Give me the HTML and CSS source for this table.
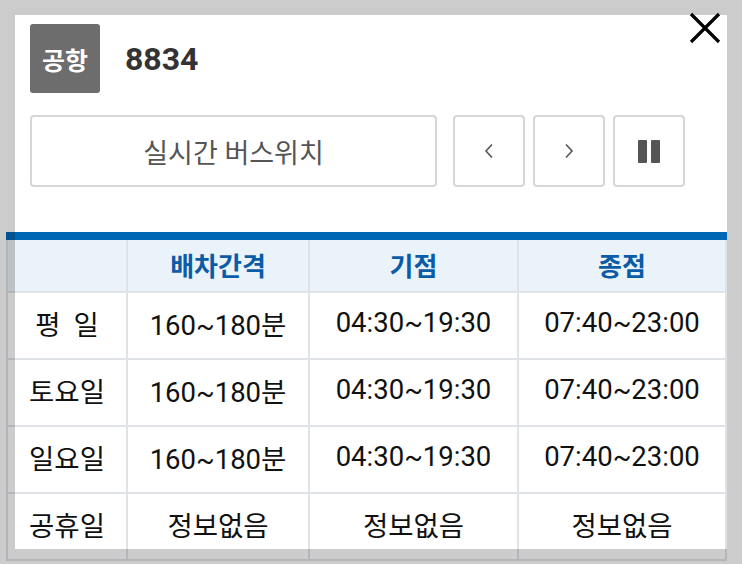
FILE: index.html
```html
<!DOCTYPE html>
<html lang="ko">
<head>
<meta charset="utf-8">
<title>8834</title>
<link rel="stylesheet" href="styles.css">
</head>
<body>
<div class="page">
  <div class="head">
    <span class="badge">공항</span>
    <h1 class="route">8834</h1>
  </div>
  <div class="controls">
    <button class="btn btn-wide">실시간 버스위치</button>
    <button class="btn btn-sq" aria-label="이전">
      <svg width="10" height="16" viewBox="0 0 10 16"><path d="M8 1.5 L2 8 L8 14.5" fill="none" stroke="#555" stroke-width="1.6"/></svg>
    </button>
    <button class="btn btn-sq" aria-label="다음">
      <svg width="10" height="16" viewBox="0 0 10 16"><path d="M2 1.5 L8 8 L2 14.5" fill="none" stroke="#555" stroke-width="1.6"/></svg>
    </button>
    <button class="btn btn-sq" aria-label="일시정지">
      <span class="pause"><span></span><span></span></span>
    </button>
  </div>
  <div class="schedule">
    <table>
      <colgroup>
        <col class="c1"><col class="c2"><col class="c3"><col class="c4">
      </colgroup>
      <thead>
        <tr><th></th><th>배차간격</th><th>기점</th><th>종점</th></tr>
      </thead>
      <tbody>
        <tr><td class="day">평 일</td><td>160~180분</td><td>04:30~19:30</td><td>07:40~23:00</td></tr>
        <tr><td class="day">토요일</td><td>160~180분</td><td>04:30~19:30</td><td>07:40~23:00</td></tr>
        <tr><td class="day">일요일</td><td>160~180분</td><td>04:30~19:30</td><td>07:40~23:00</td></tr>
        <tr><td class="day">공휴일</td><td>정보없음</td><td>정보없음</td><td>정보없음</td></tr>
      </tbody>
    </table>
  </div>
</div>
<div class="dim"></div>
<button class="close" aria-label="닫기">
  <svg width="32" height="32" viewBox="0 0 32 32"><path d="M2 2 L30 30 M30 2 L2 30" stroke="#000" stroke-width="3.2" fill="none"/></svg>
</button>
</body>
</html>
```

FILE: styles.css
```css
html, body {
  margin: 0;
  padding: 0;
  background: #fff;
  overflow: hidden;
}
body {
  font-family: Roboto, "Noto Sans CJK KR", "Noto Sans", sans-serif;
  color: #111;
}
.page {
  padding: 24px 0 0 30px;
}
.head {
  display: flex;
  align-items: center;
  gap: 25px;
  height: 69px;
}
.badge {
  width: 70px;
  height: 69px;
  background: #6d6d6d;
  color: #fff;
  border-radius: 3px;
  display: flex;
  align-items: center;
  justify-content: center;
  font-weight: 700;
  font-size: 25px;
}
.route {
  margin: 0;
  font-size: 32px;
  font-weight: 700;
  color: #333;
}
.controls {
  display: flex;
  gap: 8px;
  margin-top: 22px;
}
.btn {
  box-sizing: border-box;
  height: 72px;
  background: #fff;
  border: 2px solid #d6d6d6;
  border-radius: 4px;
  padding: 0;
  font-family: inherit;
  display: flex;
  align-items: center;
  justify-content: center;
}
.btn-wide {
  width: 407px;
  margin-right: 8px;
  font-size: 27px;
  color: #555;
}
.btn-sq {
  width: 72px;
}
.pause {
  display: flex;
  gap: 4px;
}
.pause span {
  width: 9px;
  height: 23px;
  background: #555;
  border-radius: 1px;
}
.schedule {
  margin: 45px 0 0 -24px;
  width: 721px;
  border-top: 8px solid #0067b4;
}
table {
  width: 721px;
  table-layout: fixed;
  border-collapse: separate;
  border-spacing: 0;
}
col.c1 { width: 122px; }
col.c2 { width: 182px; }
col.c3 { width: 209px; }
col.c4 { width: 208px; }
th, td {
  box-sizing: border-box;
  padding: 0;
  text-align: center;
  border-right: 2px solid #dfe3e8;
  border-bottom: 2px solid #dfe3e8;
}
th:first-child, td:first-child {
  border-left: 2px solid #dfe3e8;
}
th {
  height: 53px;
  padding-bottom: 3px;
  background: #ebf3fa;
  color: #0b5ca6;
  font-size: 26px;
  font-weight: 700;
}
td {
  height: 67px;
  padding-bottom: 6px;
  font-size: 27.5px;
  font-weight: 400;
}
td.day {
  word-spacing: 6px;
}
.dim {
  position: absolute;
  left: 15px;
  top: 15px;
  width: 712px;
  height: 534px;
  box-shadow: 0 0 0 1200px rgba(0, 0, 0, 0.2);
  pointer-events: none;
}
.close {
  position: absolute;
  left: 689px;
  top: 12px;
  width: 32px;
  height: 32px;
  padding: 0;
  border: 0;
  background: transparent;
  z-index: 2;
}
.close svg {
  display: block;
}
```
